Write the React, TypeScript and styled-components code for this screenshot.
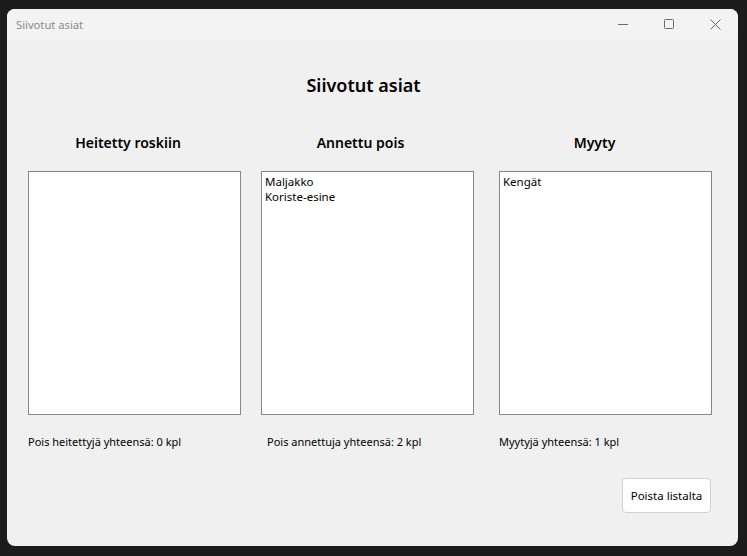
import React from "react";
import styled, { createGlobalStyle } from "styled-components";

const GlobalStyle = createGlobalStyle`
  html, body {
    margin: 0;
    padding: 0;
    background: #1c1c1c;
    font-family: "Noto Sans", "Open Sans", Arial, sans-serif;
  }
  * { box-sizing: border-box; }
`;

const Window = styled.div`
  margin: 9px 0 0 7px;
  width: 731px;
  height: 537px;
  border-radius: 8px;
  background: #f0f0f0;
  overflow: hidden;
  display: flex;
  flex-direction: column;
`;

const TitleBar = styled.div`
  height: 30px;
  flex: none;
  display: flex;
  align-items: center;
  padding-left: 9px;
  background: #f3f3f3;
  color: #8a8a8a;
  font-size: 11.2px;
`;

const Controls = styled.div`
  margin-left: auto;
  display: flex;
  height: 100%;
`;

const ControlButton = styled.div`
  width: 46px;
  height: 100%;
  display: flex;
  align-items: center;
  justify-content: center;
  color: #6b6b6b;
`;

const Content = styled.div`
  flex: 1;
  display: flex;
  flex-direction: column;
`;

const MainTitle = styled.h1`
  margin: 34px 0 0;
  padding-right: 18px;
  text-align: center;
  font-size: 18px;
  line-height: 24px;
  font-weight: 600;
  color: #000;
`;

const ColumnsRow = styled.div`
  display: flex;
  padding-left: 21px;
  margin-top: 35px;
`;

const Column = styled.div<{ $gap: number }>`
  width: 213px;
  margin-left: ${(p) => p.$gap}px;
  display: flex;
  flex-direction: column;
`;

const ColumnHeading = styled.h2<{ $shift: number }>`
  margin: 0;
  padding-top: 1px;
  height: 39px;
  padding-right: ${(p) => p.$shift}px;
  text-align: center;
  font-size: 14px;
  line-height: 20px;
  font-weight: 600;
  color: #000;
`;

const ListBox = styled.div`
  height: 244px;
  border: 1px solid #828790;
  background: #fff;
  padding: 2px 3px;
  font-size: 11.5px;
  line-height: 15px;
  color: #000;
`;

const Total = styled.div<{ $indent: number }>`
  margin-top: 19px;
  padding-left: ${(p) => p.$indent}px;
  font-size: 11px;
  line-height: 16px;
  color: #000;
`;

const ButtonRow = styled.div`
  display: flex;
  justify-content: flex-end;
  padding-right: 27px;
  margin-top: 28px;
`;

const Button = styled.button`
  width: 89px;
  height: 35px;
  background: #fff;
  border: 1px solid #d0d0d0;
  border-radius: 4px;
  font-family: inherit;
  font-size: 11.5px;
  color: #000;
  padding: 0;
`;

const columns = [
  { title: "Heitetty roskiin", items: [] as string[], total: "Pois heitettyjä yhteensä", gap: 0, shift: 13, indent: 0 },
  { title: "Annettu pois", items: ["Maljakko", "Koriste-esine"], total: "Pois annettuja yhteensä", gap: 20, shift: 14, indent: 6 },
  { title: "Myyty", items: ["Kengät"], total: "Myytyjä yhteensä", gap: 25, shift: 22, indent: 0 },
];

export default function App() {
  return (
    <>
      <GlobalStyle />
      <Window>
        <TitleBar>
          Siivotut asiat
          <Controls>
            <ControlButton>
              <svg width="10" height="10" viewBox="0 0 10 10">
                <path d="M0 5.5h10" stroke="currentColor" strokeWidth="1" />
              </svg>
            </ControlButton>
            <ControlButton>
              <svg width="10" height="10" viewBox="0 0 10 10">
                <rect x="0.5" y="0.5" width="9" height="9" rx="1" fill="none" stroke="currentColor" strokeWidth="1" />
              </svg>
            </ControlButton>
            <ControlButton>
              <svg width="11" height="11" viewBox="0 0 11 11">
                <path d="M0.5 0.5l10 10M10.5 0.5l-10 10" stroke="currentColor" strokeWidth="1" />
              </svg>
            </ControlButton>
          </Controls>
        </TitleBar>
        <Content>
          <MainTitle>Siivotut asiat</MainTitle>
          <ColumnsRow>
            {columns.map((c) => (
              <Column key={c.title} $gap={c.gap}>
                <ColumnHeading $shift={c.shift}>{c.title}</ColumnHeading>
                <ListBox>
                  {c.items.map((i) => (
                    <div key={i}>{i}</div>
                  ))}
                </ListBox>
                <Total $indent={c.indent}>
                  {c.total}: {c.items.length} kpl
                </Total>
              </Column>
            ))}
          </ColumnsRow>
          <ButtonRow>
            <Button>Poista listalta</Button>
          </ButtonRow>
        </Content>
      </Window>
    </>
  );
}
